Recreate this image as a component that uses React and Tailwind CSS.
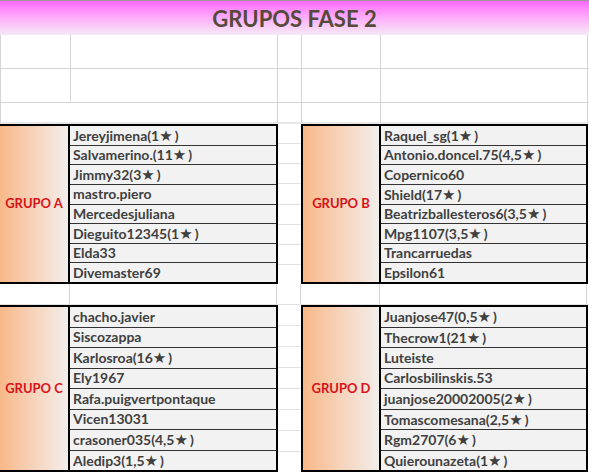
const groupA = ['Jereyjimena(1★)', 'Salvamerino.(11★)', 'Jimmy32(3★)', 'mastro.piero', 'Mercedesjuliana', 'Dieguito12345(1★)', 'Elda33', 'Divemaster69'];
const groupB = ['Raquel_sg(1★)', 'Antonio.doncel.75(4,5★)', 'Copernico60', 'Shield(17★)', 'Beatrizballesteros6(3,5★)', 'Mpg1107(3,5★)', 'Trancarruedas', 'Epsilon61'];
const groupC = ['chacho.javier', 'Siscozappa', 'Karlosroa(16★)', 'Ely1967', 'Rafa.puigvertpontaque', 'Vicen13031', 'crasoner035(4,5★)', 'Aledip3(1,5★)'];
const groupD = ['Juanjose47(0,5★)', 'Thecrow1(21★)', 'Luteiste', 'Carlosbilinskis.53', 'juanjose20002005(2★)', 'Tomascomesana(2,5★)', 'Rgm2707(6★)', 'Quierounazeta(1★)'];

// empty spreadsheet row, lines where the sheet columns are
function SheetRow({ height }) {
  return (
    <div className={`flex border-l border-[#d4d4d4] border-b ${height}`}>
      <div className="w-[70px] border-r border-[#d4d4d4]" />
      <div className="w-[207px] border-r border-[#d4d4d4]" />
      <div className="w-[24px] border-r border-[#d4d4d4]" />
      <div className="w-[79px] border-r border-[#d4d4d4]" />
      <div className="w-[207px] border-r border-[#d4d4d4]" />
    </div>
  );
}

function Name({ text }) {
  const i = text.indexOf('★');
  if (i < 0) return text;
  return (
    <>
      {text.slice(0, i)}
      <span className="mr-[2px] text-[15px]">★</span>
      {text.slice(i + 1)}
    </>
  );
}

function Group({ label, names, wide }) {
  return (
    <div className={`flex border-y-2 border-r-2 border-black ${wide ? 'w-[287px] border-l-2' : 'w-[278px]'}`}>
      <div className={`flex items-center justify-center border-r-2 border-black bg-linear-to-r from-[#f8b889] to-[#f2eeeb] ${wide ? 'w-[78px]' : 'w-[70px]'}`}>
        <span className="text-[13px] font-bold text-[#d81219]">{label}</span>
      </div>
      <div className="flex flex-1 flex-col">
        {names.map((n) => (
          <div key={n} className="flex flex-1 items-center border-b border-[#333333] bg-[#f2f2f2] pl-[3px] last:border-b-0">
            <span className="text-[14px] font-bold leading-none text-[#404040]"><Name text={n} /></span>
          </div>
        ))}
      </div>
    </div>
  );
}

function Spacer() {
  return (
    <div className="flex w-[23px] flex-col">
      {Array.from({ length: 8 }).map((_, i) => (
        <div key={i} className="flex-1 border-b border-[#e2e2e2] last:border-b-0" />
      ))}
    </div>
  );
}

export default function App() {
  return (
    <div className="h-[474px] w-[589px] overflow-hidden bg-white font-['Lato','DejaVu_Sans',sans-serif]">
      <div className="flex h-[35px] items-center justify-center border-t border-[#9a9a9a] bg-linear-to-b from-[#ff66ff] to-[#f3e9f3]">
        <h1 className="text-[22px] font-bold text-[#554a3a]">GRUPOS FASE 2</h1>
      </div>
      <SheetRow height="h-[34px]" />
      <SheetRow height="h-[34px]" />
      <div className="flex h-[21px] border-l border-[#d4d4d4] border-b-2 border-b-[#e8e8e8]">
        <div className="w-[277px] border-r border-[#d4d4d4]" />
        <div className="w-[24px] border-r border-[#d4d4d4]" />
        <div className="w-[79px] border-r border-[#d4d4d4]" />
        <div className="w-[207px] border-r border-[#d4d4d4]" />
      </div>

      <div className="flex h-[160px]">
        <Group label="GRUPO A" names={groupA} />
        <Spacer />
        <Group label="GRUPO B" names={groupB} wide />
      </div>

      <div className="flex h-[21px] border-b border-[#e2e2e2]">
        <div className="w-[70px] border-r border-[#d4d4d4]" />
        <div className="w-[207px] border-r border-[#d4d4d4]" />
        <div className="w-[24px] border-r border-[#d4d4d4]" />
        <div className="w-[79px] border-r border-[#d4d4d4]" />
        <div className="w-[207px] border-r border-[#d4d4d4]" />
      </div>

      <div className="flex h-[167px]">
        <Group label="GRUPO C" names={groupC} />
        <Spacer />
        <Group label="GRUPO D" names={groupD} wide />
      </div>
    </div>
  );
}
